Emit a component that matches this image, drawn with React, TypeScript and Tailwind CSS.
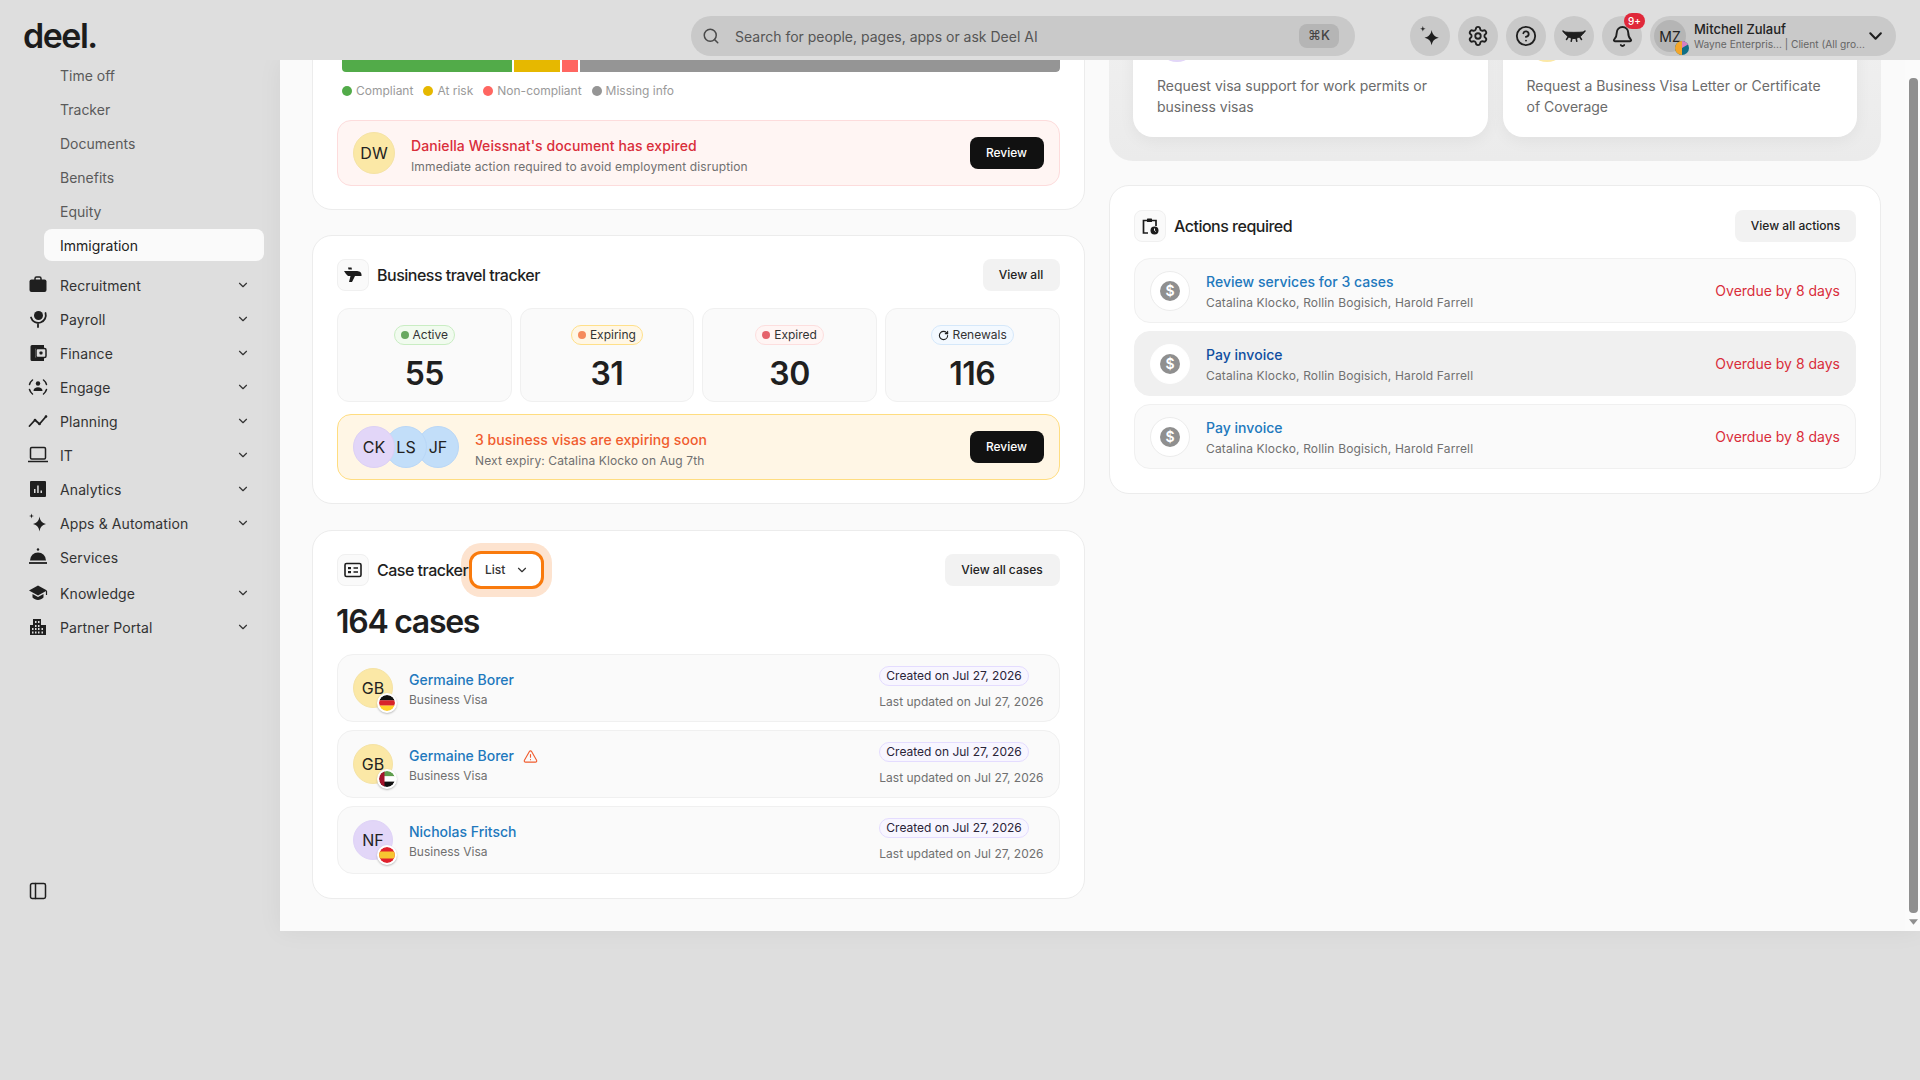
import React from 'react';
import { Bell, ChevronDown, CircleHelp, PanelLeft, Search, Settings, TriangleAlert, RotateCw } from 'lucide-react';

const subItems = ['Time off', 'Tracker', 'Documents', 'Benefits', 'Equity'];

const SparkleIcon = ({ className }: { className?: string }) => (
  <svg viewBox="0 0 20 20" className={className} fill="currentColor">
    <path d="M11.5 4.5c.7 4 2.5 6 6.5 7-4 1-5.800 3-6.500 7-.7-4-2.500-6-6.500-7 4-1 5.800-3 6.500-7z" />
    <path d="M3.500 1l.6 1.900 1.900.6-1.900.6-.6 1.900-.6-1.900L1 3.500l1.900-.6z" />
  </svg>
);

const navIcons: Record<string, React.ReactNode> = {
  Recruitment: (
    <>
      <path d="M7 5V3.500A1.500 1.500 0 0 1 8.500 2h3A1.500 1.500 0 0 1 13 3.500V5" fill="none" stroke="currentColor" strokeWidth="1.500" />
      <rect x="1.500" y="4.500" width="17" height="12.500" rx="2" />
    </>
  ),
  Payroll: (
    <>
      <circle cx="10.500" cy="6.500" r="4.500" />
      <path d="M3 8.500A7.500 7.500 0 1 0 17.500 4M10 15.500V18" fill="none" stroke="currentColor" strokeWidth="1.800" strokeLinecap="round" />
    </>
  ),
  Finance: (
    <>
      <path d="M4 2h12v3H9.500A2.500 2.500 0 0 0 7 7.500v5A2.500 2.500 0 0 0 9.500 15H16v3H4a1.500 1.500 0 0 1-1.500-1.500v-13A1.500 1.500 0 0 1 4 2z" />
      <rect x="8" y="5.500" width="10" height="9" rx="1.500" fill="none" stroke="currentColor" strokeWidth="1.500" />
      <rect x="11.500" y="8.500" width="3" height="3" rx=".8" />
    </>
  ),
  Engage: (
    <>
      <circle cx="10" cy="6.500" r="2.200" />
      <path d="M5.500 14c0-2.600 2-3.800 4.500-3.800s4.500 1.200 4.500 3.800z" />
      <path d="M1.500 7.500A9 9 0 0 1 4.500 3M18.500 7.500A9 9 0 0 0 15.500 3M1.500 12.500A9 9 0 0 0 4.500 17M18.500 12.500A9 9 0 0 1 15.500 17" fill="none" stroke="currentColor" strokeWidth="1.500" strokeLinecap="round" />
    </>
  ),
  Planning: (
    <>
      <path d="M1.500 15 7 9l4.500 4L18 5.500" fill="none" stroke="currentColor" strokeWidth="1.800" strokeLinecap="round" strokeLinejoin="round" />
      <circle cx="7" cy="9" r="1.300" />
      <circle cx="11.500" cy="13" r="1.300" />
      <circle cx="18" cy="5.500" r="1.300" />
    </>
  ),
  IT: (
    <>
      <rect x="2.500" y="2.500" width="15" height="11.500" rx="1.200" fill="none" stroke="currentColor" strokeWidth="1.500" />
      <path d="M0 16.500h20" fill="none" stroke="currentColor" strokeWidth="1.500" />
    </>
  ),
  Analytics: (
    <path fillRule="evenodd" d="M3 2h14a1 1 0 0 1 1 1v14a1 1 0 0 1-1 1H3a1 1 0 0 1-1-1V3a1 1 0 0 1 1-1zm3 12h1.500V10H6zm3.200 0h1.500V6.500H9.200zm3.300 0H14v-2.500h-1.500z" />
  ),
  'Apps & Automation': (
    <>
      <path d="M11.500 3.500c.7 4.500 2.500 6.500 6.500 7.500-4 1-5.800 3-6.500 7.500-.7-4.500-2.500-6.500-6.500-7.500 4-1 5.800-3 6.500-7.500z" />
      <path d="M3.500.5l.6 1.900 1.900.6-1.900.6-.6 1.900-.6-1.900L1 3l1.900-.6z" />
    </>
  ),
  Services: (
    <>
      <circle cx="10" cy="2.500" r="1.200" />
      <path d="M2 13.500a8 8 0 0 1 16 0z" />
      <path d="M1 16h18" fill="none" stroke="currentColor" strokeWidth="1.800" />
    </>
  ),
  Knowledge: (
    <>
      <path d="M10 2.500 19 7.500l-9 5-9-5z" />
      <path d="M4.500 11v3.500c1.500 1.500 3.500 2.500 5.500 2.500s4-1 5.500-2.500V11L10 14z" />
      <path d="M18.500 8v4" fill="none" stroke="currentColor" strokeWidth="1.200" />
    </>
  ),
  'Partner Portal': (
    <path fillRule="evenodd" d="M5 2h8v6h5v10H2V8h3zm2 2v2h1.500V4zm3 0v2h1.500V4zM7 8v2h1.500V8zm3 0v2h1.500V8zM4 11v2h1.500v-2zm3 0v2h1.500v-2zm3 0v2h1.500v-2zm3.500 0v2H15v-2zM4 14.500v2h1.500v-2zm3 0v2h1.500v-2zm3 0v2h1.500v-2zm3.500 0v2H15v-2z" />
  ),
};

const navItems = ['Recruitment', 'Payroll', 'Finance', 'Engage', 'Planning', 'IT', 'Analytics', 'Apps & Automation'];

const NavRow = ({ label, chevron = true }: { label: string; chevron?: boolean }) => (
  <div className="flex h-8 items-center pl-[28px] pr-[30px] text-[14px] text-[#333]">
    <svg viewBox="0 0 20 20" className="h-5 w-5 shrink-0 text-[#1f1f1f]" fill="currentColor">
      {navIcons[label]}
    </svg>
    <span className="ml-3 flex-1 tracking-[0.1px]">{label}</span>
    {chevron && <ChevronDown className="h-[14px] w-[14px] text-[#333]" strokeWidth={2} />}
  </div>
);

const Sidebar = () => (
  <aside className="flex h-[871px] w-[280px] shrink-0 flex-col">
    <div className="-mt-px flex flex-col gap-[2px]">
      {subItems.map((s) => (
        <div key={s} className="flex h-8 items-center pl-[60px] text-[14px] text-[#5a5a5a]">
          {s}
        </div>
      ))}
      <div className="ml-[44px] flex h-8 w-[220px] items-center rounded-[8px] bg-[#fafafa] pl-4 text-[14px] text-[#222]">
        Immigration
      </div>
    </div>
    <div className="mt-[8px] flex flex-col gap-[2px]">
      {navItems.map((n) => (
        <NavRow key={n} label={n} />
      ))}
      <NavRow label="Services" chevron={false} />
    </div>
    <div className="mt-1 flex flex-col gap-[2px]">
      <NavRow label="Knowledge" />
      <NavRow label="Partner Portal" />
    </div>
    <div className="mt-auto mb-[30px] pl-[28px]">
      <PanelLeft className="h-5 w-5 text-[#1f1f1f]" strokeWidth={1.8} />
    </div>
  </aside>
);

const RoundButton = ({ children }: { children: React.ReactNode }) => (
  <div className="relative flex h-10 w-10 items-center justify-center rounded-full bg-[#c9c9c9] text-[#1f1f1f]">
    {children}
  </div>
);

const TopBar = () => (
  <header className="relative z-10 flex h-[60px] items-center bg-[#dedede] pl-[23px] pr-6 pt-[12px]">
    <div className="w-[668px] text-[34px] font-semibold leading-none tracking-[-1.5px] text-[#1c1c1c]">deel.</div>
    <div className="flex h-10 w-[664px] items-center rounded-full bg-[#c9c9c9] pl-[11px] pr-[16px]">
      <Search className="h-[18px] w-[18px] text-[#4a4a4a]" strokeWidth={2} />
      <span className="ml-[15px] flex-1 text-[14px] text-[#555]">Search for people, pages, apps or ask Deel AI</span>
      <span className="flex h-6 w-10 items-center justify-center rounded-[8px] bg-[#b5b5b5] text-[13px] font-medium text-[#444]">⌘K</span>
    </div>
    <div className="ml-[55px] flex gap-2">
      <RoundButton>
        <SparkleIcon className="h-[22px] w-[22px]" />
      </RoundButton>
      <RoundButton>
        <Settings className="h-[22px] w-[22px]" strokeWidth={2} />
      </RoundButton>
      <RoundButton>
        <CircleHelp className="h-[22px] w-[22px]" strokeWidth={2} />
      </RoundButton>
      <RoundButton>
        <svg viewBox="0 0 24 24" className="h-[24px] w-[24px]" fill="currentColor" stroke="currentColor" strokeLinecap="round">
          <path d="M2 8c6 .5 14 .5 20 0-2 4-6 6.500-10 6.500S4 12 2 8z" strokeWidth="1" />
          <path d="M6.500 12.500 4.500 15.500M10 14l-.8 3.200M14 14l.8 3.200M17.500 12.500l2 3M3 9 1 7M21 9l2-2" fill="none" strokeWidth="1.500" />
        </svg>
      </RoundButton>
      <RoundButton>
        <Bell className="h-[23px] w-[23px]" strokeWidth={2} />
        <span className="absolute -right-[3px] -top-[3px] flex h-4 w-[21px] items-center justify-center rounded-full bg-[#e0283a] text-[10px] font-medium text-white">9+</span>
      </RoundButton>
    </div>
    <div className="ml-2 flex h-10 w-[246px] items-center rounded-full bg-[#c9c9c9] pl-1 pr-[10px]">
      <div className="relative flex h-8 w-8 shrink-0 items-center justify-center rounded-full bg-[#b5b5b5] text-[14px] text-[#222]">
        MZ
        <svg viewBox="0 0 14 14" className="absolute -bottom-[3px] -right-[3px] h-[14px] w-[14px]">
          <circle cx="7" cy="7" r="7" fill="#0f6f86" />
          <path d="M7 7V0a7 7 0 0 0-7 7z" fill="#f4a62a" />
          <path d="M7 7H0a7 7 0 0 0 7 7z" fill="#f4a62a" />
          <path d="M7 7V0a7 7 0 0 1 6 3.500z" fill="#d67fc0" />
        </svg>
      </div>
      <div className="ml-2 flex-1 leading-none">
        <div className="text-[13px] font-medium leading-[15px] text-[#222]">Mitchell Zulauf</div>
        <div className="whitespace-nowrap text-[10.200px] leading-[14px] text-[#666]">Wayne Enterpris... | Client (All gro...</div>
      </div>
      <ChevronDown className="h-6 w-6 text-[#1f1f1f]" strokeWidth={2.4} />
    </div>
  </header>
);

const legend = [
  { label: 'Compliant', dot: 'bg-[#52ab49]' },
  { label: 'At risk', dot: 'bg-[#e6b800]' },
  { label: 'Non-compliant', dot: 'bg-[#ff6661]' },
  { label: 'Missing info', dot: 'bg-[#959595]' },
];

const ReviewButton = () => (
  <button className="flex h-8 w-[74px] items-center justify-center rounded-[8px] bg-[#111] text-[12px] font-medium text-white">
    Review
  </button>
);

const Avatar = ({ text, className }: { text: string; className: string }) => (
  <div className={`flex h-[42px] w-[42px] shrink-0 items-center justify-center rounded-full border text-[16px] text-[#222] ${className}`}>
    {text}
  </div>
);

const IconBox = ({ children }: { children: React.ReactNode }) => (
  <div className="flex h-8 w-8 shrink-0 items-center justify-center rounded-[8px] border border-[#f0f0f0] bg-[#fafafa] text-[#1c1c1c]">
    {children}
  </div>
);

const GreyButton = ({ label, width }: { label: string; width: string }) => (
  <button className={`flex h-8 items-center justify-center rounded-[8px] bg-[#f2f2f2] text-[12px] font-medium text-[#222] ${width}`}>
    {label}
  </button>
);

const stats = [
  { label: 'Active', value: '55', pill: 'border-[#c9edc3] bg-[#f1fbef]', dot: 'bg-[#68a860]' },
  { label: 'Expiring', value: '31', pill: 'border-[#ffe08a] bg-[#fff7e6]', dot: 'bg-[#f58b5c]' },
  { label: 'Expired', value: '30', pill: 'border-[#fddede] bg-[#fff5f4]', dot: 'bg-[#e5636c]' },
  { label: 'Renewals', value: '116', pill: 'border-[#d5e8fa] bg-[#f3f9ff]', dot: '' },
];

const Flag = ({ kind }: { kind: 'de' | 'ae' | 'es' }) => (
  <svg viewBox="0 0 16 16" className="absolute -bottom-[6px] -right-[5px] h-5 w-5 rounded-full border-2 border-white bg-white shadow-[0_1px_2px_rgba(0,0,0,0.25)]">
    <clipPath id={`clip-${kind}`}>
      <circle cx="8" cy="8" r="8" />
    </clipPath>
    <g clipPath={`url(#clip-${kind})`}>
      {kind === 'de' && (
        <>
          <rect width="16" height="5.400" fill="#111" />
          <rect y="5.300" width="16" height="5.400" fill="#d8232a" />
          <rect y="10.600" width="16" height="5.400" fill="#ffd02b" />
        </>
      )}
      {kind === 'ae' && (
        <>
          <rect width="16" height="5.400" fill="#5f9e4e" />
          <rect y="5.300" width="16" height="5.400" fill="#fff" />
          <rect y="10.600" width="16" height="5.400" fill="#111" />
          <rect width="5.500" height="16" fill="#a3142b" />
        </>
      )}
      {kind === 'es' && (
        <>
          <rect width="16" height="16" fill="#e0202c" />
          <rect y="4.500" width="16" height="7" fill="#f7c531" />
        </>
      )}
    </g>
  </svg>
);

const cases = [
  { initials: 'GB', name: 'Germaine Borer', color: 'border-[#f5e3a5] bg-[#fbe8a6]', flag: 'de' as const, warn: false },
  { initials: 'GB', name: 'Germaine Borer', color: 'border-[#f5e3a5] bg-[#fbe8a6]', flag: 'ae' as const, warn: true },
  { initials: 'NF', name: 'Nicholas Fritsch', color: 'border-[#dfd3f7] bg-[#e2d6f8]', flag: 'es' as const, warn: false },
];

const actions = [
  { title: 'Review services for 3 cases', active: false },
  { title: 'Pay invoice', active: true },
  { title: 'Pay invoice', active: false },
];

const LeftColumn = () => (
  <div className="flex flex-col">
    {/* Compliance card, scrolled past its header */}
    <section className="rounded-b-[20px] border border-[#ececec] bg-white px-6 pb-[23px] pt-[35px]">
      <div className="flex h-4 gap-[2px] overflow-hidden rounded-[4px] pl-[5px]">
        <div className="w-[170px] rounded-l-[4px] bg-[#52ab49]" />
        <div className="w-[46px] bg-[#e6b800]" />
        <div className="w-[16px] bg-[#ff6661]" />
        <div className="flex-1 rounded-r-[4px] bg-[#959595]" />
      </div>
      <div className="mt-[9px] flex h-[20px] gap-[10px] pl-[5px]">
        {legend.map((l) => (
          <div key={l.label} className="flex items-center gap-1 text-[12px] text-[#9a9a9a]">
            <span className={`h-[10px] w-[10px] rounded-full ${l.dot}`} />
            {l.label}
          </div>
        ))}
      </div>
      <div className="mt-[19px] flex h-[66px] items-center rounded-[14px] border border-[#fddcdc] bg-[#fff5f3] pl-[15px] pr-[15px]">
        <Avatar text="DW" className="border-[#f5e3a5] bg-[#fbe8a6]" />
        <div className="ml-4 flex-1 pt-[6px]">
          <div className="text-[14px] font-medium leading-5 tracking-[0.08px] text-[#d92d3a]">Daniella Weissnat's document has expired</div>
          <div className="mt-px text-[12px] leading-5 tracking-[0.13px] text-[#707070]">Immediate action required to avoid employment disruption</div>
        </div>
        <ReviewButton />
      </div>
    </section>

    {/* Business travel tracker */}
    <section className="mt-[25px] rounded-[20px] border border-[#ececec] bg-white px-6 pb-[23px] pt-[23px]">
      <div className="flex items-center">
        <IconBox>
          <svg viewBox="0 0 20 20" className="h-5 w-5" fill="currentColor">
            <path d="M5 2.500h3.500l.5 2H5.500zM1 6h12c3 0 5.500 1 5.500 3.500V11H12l-3 6H6l1.500-6H5L3 9z" />
          </svg>
        </IconBox>
        <h2 className="ml-2 flex-1 text-[16px] font-medium tracking-[-0.5px] text-[#1f1f1f]">Business travel tracker</h2>
        <GreyButton label="View all" width="w-[77px]" />
      </div>
      <div className="mt-[17px] grid grid-cols-4 gap-2">
        {stats.map((s) => (
          <div key={s.label} className="flex h-[94px] flex-col items-center rounded-[12px] border border-[#f0f0f0] bg-[#fafafa] pt-4">
            <div className={`flex h-5 items-center gap-1 rounded-full border px-[6px] text-[12px] text-[#333] ${s.pill}`}>
              {s.dot ? <span className={`h-2 w-2 rounded-full ${s.dot}`} /> : <RotateCw className="h-[11px] w-[11px] text-[#222]" strokeWidth={2.4} />}
              {s.label}
            </div>
            <div className="mt-[7px] text-[32px] font-semibold leading-[44px] tracking-[-0.5px] text-[#1f1f1f]">{s.value}</div>
          </div>
        ))}
      </div>
      <div className="mt-[12px] flex h-[66px] items-center rounded-[14px] border border-[#ffdd80] bg-[#fff6e5] pl-[15px] pr-[15px]">
        <div className="flex -space-x-[10px]">
          <Avatar text="CK" className="relative z-20 border-[#dcd0f5] bg-[#e2d6f8]" />
          <Avatar text="LS" className="relative z-10 border-[#b9d7f7] bg-[#c2def9]" />
          <Avatar text="JF" className="border-[#b9d7f7] bg-[#c2def9]" />
        </div>
        <div className="ml-4 flex-1 pt-[6px]">
          <div className="text-[14px] font-medium leading-5 tracking-[0.05px] text-[#f05c2e]">3 business visas are expiring soon</div>
          <div className="mt-px text-[12px] leading-5 tracking-[0.13px] text-[#707070]">Next expiry: Catalina Klocko on Aug 7th</div>
        </div>
        <ReviewButton />
      </div>
    </section>

    {/* Case tracker */}
    <section className="mt-[26px] rounded-[20px] border border-[#ececec] bg-white px-6 pb-6 pt-[20px]">
      <div className="flex items-center">
        <IconBox>
          <svg viewBox="0 0 20 20" className="h-5 w-5" fill="none" stroke="currentColor" strokeWidth="1.600">
            <rect x="2" y="3.500" width="16" height="13" rx="1.500" />
            <rect x="5" y="7" width="3" height="2.200" fill="currentColor" stroke="none" />
            <rect x="5" y="11" width="3" height="2.200" fill="currentColor" stroke="none" />
            <path d="M10.500 8h4.500M10.500 12h4.500" />
          </svg>
        </IconBox>
        <div className="flex h-[38px] items-center">
          <h2 className="relative z-10 ml-2 w-[92px] whitespace-nowrap text-[16px] font-medium tracking-[-0.5px] text-[#1f1f1f]">Case tracker</h2>
          <div className="flex h-[38px] w-[75px] shrink-0 items-center rounded-[12px] border-[3px] border-[#f97a0c] bg-white pl-[13px] text-[12px] font-medium text-[#333] shadow-[0_0_0_8px_#fde3cf]">
            List
            <ChevronDown className="ml-[10px] h-[14px] w-[14px]" strokeWidth={2} />
          </div>
        </div>
        <div className="flex-1" />
        <GreyButton label="View all cases" width="w-[115px]" />
      </div>
      <div className="mt-[13px] -ml-px text-[32px] font-semibold leading-[40px] tracking-[-1.3px] text-[#1f1f1f]">164 cases</div>
      <div className="mt-[12px] flex flex-col gap-2">
        {cases.map((c, i) => (
          <div key={i} className="flex h-[68px] items-center rounded-[16px] border border-[#f0f0f0] bg-[#fafafa] pl-[15px] pr-[15px]">
            <div className={`relative flex h-10 w-10 shrink-0 items-center justify-center rounded-full border text-[16px] text-[#222] ${c.color}`}>
              {c.initials}
              <Flag kind={c.flag} />
            </div>
            <div className="ml-4 flex-1 pt-[4px]">
              <div className="flex items-center text-[14px] font-medium leading-5 text-[#2178bd]">
                {c.name}
                {c.warn && <TriangleAlert className="ml-[9px] h-[15px] w-[15px] text-[#f05c2e]" strokeWidth={1.8} />}
              </div>
              <div className="text-[12px] leading-5 text-[#707070]">Business Visa</div>
            </div>
            <div className="flex flex-col items-start pt-[2px]">
              <div className="flex h-5 items-center rounded-full border border-[#e4dcff] bg-[#f8f6ff] px-[6px] text-[12px] text-[#2a2438]">Created on Jul 27, 2026</div>
              <div className="mt-[6px] text-[12px] leading-[20px] text-[#707070]">Last updated on Jul 27, 2026</div>
            </div>
          </div>
        ))}
      </div>
    </section>
  </div>
);

const RightColumn = () => (
  <div className="flex flex-col">
    <section className="grid grid-cols-2 gap-[15px] rounded-b-[24px] bg-gradient-to-b from-[#f0f0f0] to-[#ebebeb] pb-6 pl-[24px] pr-[24px]">
      <div className="h-[117px] rounded-b-[20px] bg-white px-6 pt-[2px] shadow-[0_4px_16px_rgba(0,0,0,0.05)]">
        <div className="h-10 w-10 rounded-full bg-[#e2d6f8]" />
        <p className="mt-[13px] text-[14px] leading-[21px] text-[#6b6b6b]">Request visa support for work permits or business visas</p>
      </div>
      <div className="h-[117px] rounded-b-[20px] bg-white px-6 pt-[2px] shadow-[0_4px_16px_rgba(0,0,0,0.05)]">
        <div className="h-10 w-10 rounded-full bg-[#fbe8a6]" />
        <p className="mt-[13px] text-[14px] leading-[21px] text-[#6b6b6b]">Request a Business Visa Letter or Certificate of Coverage</p>
      </div>
    </section>

    <section className="mt-[24px] rounded-[20px] border border-[#ececec] bg-white px-6 pb-6 pt-6">
      <div className="flex items-center">
        <IconBox>
          <svg viewBox="0 0 20 20" className="h-5 w-5" fill="none" stroke="currentColor" strokeWidth="1.700">
            <path d="M8 17H3.500V4.500H7M12 4.500h4V10" />
            <rect x="7" y="2.500" width="5" height="3.500" rx=".6" fill="currentColor" stroke="none" />
            <circle cx="14.500" cy="14.500" r="4" fill="currentColor" stroke="none" />
            <path d="M14.500 12.500v2l1.200 1" stroke="#fff" strokeWidth="1" />
          </svg>
        </IconBox>
        <h2 className="ml-2 flex-1 text-[16px] font-medium tracking-[-0.5px] text-[#1f1f1f]">Actions required</h2>
        <GreyButton label="View all actions" width="w-[121px]" />
      </div>
      <div className="mt-4 flex flex-col gap-2">
        {actions.map((a, i) => (
          <div key={i} className={`flex h-[65px] items-center rounded-[16px] border pl-[15px] pr-[15px] ${a.active ? 'border-[#f0f0f0] bg-[#f0f0f0]' : 'border-[#f0f0f0] bg-[#fafafa]'}`}>
            <div className={`flex h-10 w-10 shrink-0 items-center justify-center rounded-full border bg-white ${a.active ? 'border-white' : 'border-[#ececec]'}`}>
              <span className="flex h-5 w-5 items-center justify-center rounded-full bg-[#8f8f8f] text-[14px] font-semibold leading-none text-white">$</span>
            </div>
            <div className="ml-4 flex-1 pt-[3px]">
              <div className={`text-[14px] font-medium leading-5 tracking-[0.03px] ${a.active ? 'text-[#0f4ea0]' : 'text-[#2178bd]'}`}>{a.title}</div>
              <div className="mt-px text-[12px] leading-[20px] tracking-[0.15px] text-[#707070]">Catalina Klocko, Rollin Bogisich, Harold Farrell</div>
            </div>
            <div className="text-[14px] text-[#d92d3a]">Overdue by 8 days</div>
          </div>
        ))}
      </div>
    </section>
  </div>
);

const Scrollbar = () => (
  <div className="flex w-[15px] shrink-0 flex-col items-center bg-[#fbfbfb] pt-[18px]">
    <div className="ml-[2px] h-[835px] w-[9px] rounded-[4px] bg-[#8f8f8f]" />
    <svg viewBox="0 0 10 6" className="ml-[2px] mt-[6px] h-[6px] w-[9px]" fill="#8f8f8f">
      <path d="M0 0h10L5 6z" />
    </svg>
  </div>
);

export default function App() {
  return (
    <div className="min-h-screen overflow-hidden bg-[#dedede] [font-family:Inter,sans-serif]">
      <TopBar />
      <div className="flex">
        <Sidebar />
        <main className="flex h-[871px] flex-1 overflow-hidden bg-[#fafafa] shadow-[0_0_24px_rgba(0,0,0,0.05)]">
          <div className="flex-1 overflow-hidden pl-[32px] pr-[24px]">
            <div className="-mt-[40px] grid grid-cols-[772.5px_772px] items-start gap-[24.5px]">
              <LeftColumn />
              <RightColumn />
            </div>
          </div>
          <Scrollbar />
        </main>
      </div>
    </div>
  );
}
